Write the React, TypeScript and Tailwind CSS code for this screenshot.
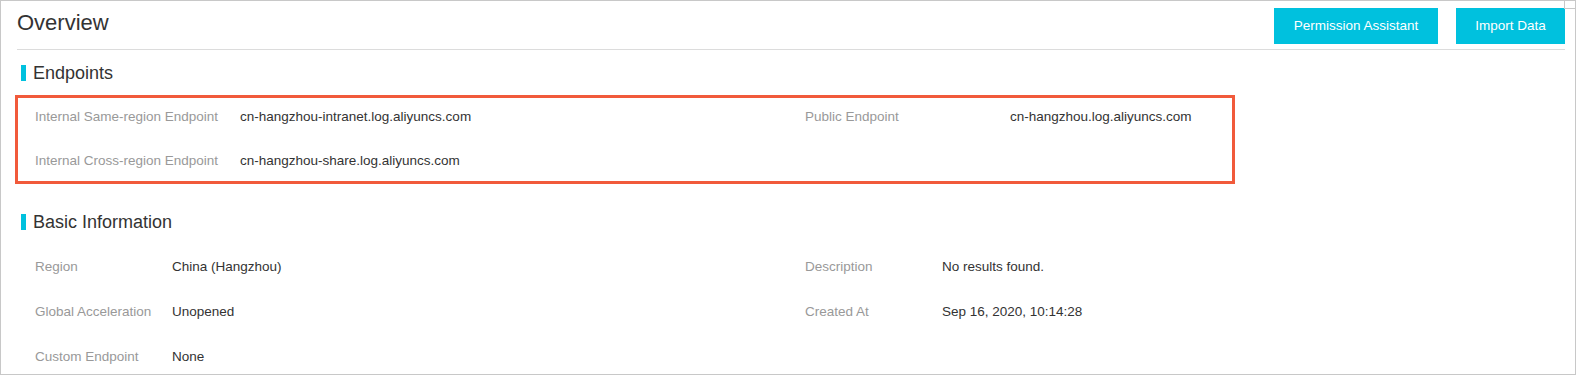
import React from "react";

type Item = { label: string; value: string };

function SectionTitle({ title }: { title: string }) {
  return (
    <div className="flex h-[30px] items-center pl-[20px]">
      <span className="h-[16px] w-[5px] bg-[#00c1de]" />
      <span className="ml-[7px] text-[18px] leading-none text-[#333]">{title}</span>
    </div>
  );
}

function Field({ item, labelW }: { item: Item; labelW: string }) {
  return (
    <div className="flex h-[38px] w-[770px] shrink-0 items-center">
      <span className={`${labelW} shrink-0 text-[#999]`}>{item.label}</span>
      <span className="text-[#333]">{item.value}</span>
    </div>
  );
}

export default function App() {
  const endpoints: Item[][] = [
    [
      { label: "Internal Same-region Endpoint", value: "cn-hangzhou-intranet.log.aliyuncs.com" },
      { label: "Public Endpoint", value: "cn-hangzhou.log.aliyuncs.com" },
    ],
    [{ label: "Internal Cross-region Endpoint", value: "cn-hangzhou-share.log.aliyuncs.com" }],
  ];
  const basic: Item[][] = [
    [
      { label: "Region", value: "China (Hangzhou)" },
      { label: "Description", value: "No results found." },
    ],
    [
      { label: "Global Acceleration", value: "Unopened" },
      { label: "Created At", value: "Sep 16, 2020, 10:14:28" },
    ],
    [{ label: "Custom Endpoint", value: "None" }],
  ];

  return (
    <div
      className="relative h-[375px] w-[1576px] overflow-hidden border border-[#c8c8c8] bg-white text-[13.5px]"
      style={{ fontFamily: '"Liberation Sans", Arial, sans-serif' }}
    >
      {/* corner notch */}
      <div className="absolute right-0 top-0 h-[8px] w-[11px] border-b border-l border-[#c8c8c8] bg-white" />

      {/* header */}
      <div className="ml-[16px] mr-[10px] flex h-[49px] items-start justify-between border-b border-[#dcdcdc]">
        <h1 className="mt-[8px] text-[22px] leading-[28px] text-[#333]">Overview</h1>
        <div className="mt-[7px] flex gap-[18px]">
          <button className="h-[36px] w-[164px] bg-[#00c1de] text-white">Permission Assistant</button>
          <button className="h-[36px] w-[109px] bg-[#00c1de] text-white">Import Data</button>
        </div>
      </div>

      <div className="mt-[8px]">
        <SectionTitle title="Endpoints" />
      </div>
      <div className="ml-[14px] mt-[7px] flex h-[89px] w-[1220px] flex-col gap-[6px] overflow-hidden border-[3px] border-[#f15a3b] pl-[17px]">
        {endpoints.map((row, i) => (
          <div key={i} className="flex">
            {row.map((it) => (
              <Field key={it.label} item={it} labelW="w-[205px]" />
            ))}
          </div>
        ))}
      </div>

      <div className="mt-[23px]">
        <SectionTitle title="Basic Information" />
      </div>
      <div className="mt-[11px] flex flex-col gap-[7px] pl-[34px]">
        {basic.map((row, i) => (
          <div key={i} className="flex">
            {row.map((it) => (
              <Field key={it.label} item={it} labelW="w-[137px]" />
            ))}
          </div>
        ))}
      </div>
    </div>
  );
}
